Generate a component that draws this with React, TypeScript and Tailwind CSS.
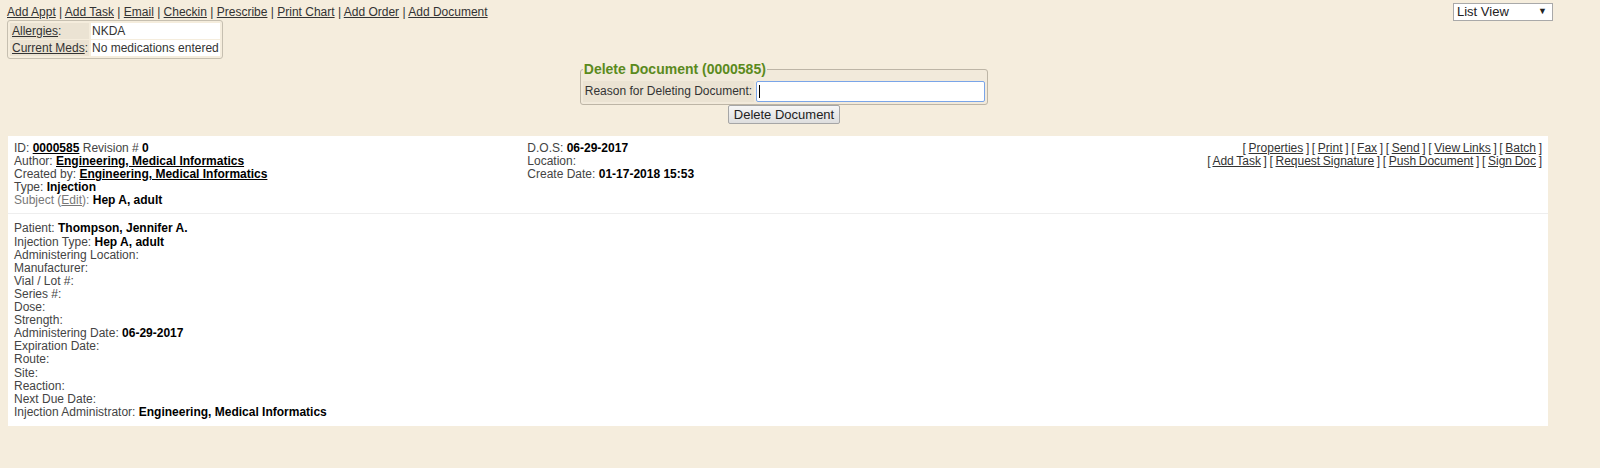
import React from "react";

const navLinks = ["Add Appt", "Add Task", "Email", "Checkin", "Prescribe", "Print Chart", "Add Order", "Add Document"];

function L({ children }: { children: React.ReactNode }) {
  return <span className="text-[#444]">{children}</span>;
}
function B({ children }: { children: React.ReactNode }) {
  return <span className="font-bold text-black">{children}</span>;
}

export default function App() {
  const actions1 = ["Properties", "Print", "Fax", "Send", "View Links", "Batch"];
  const actions2 = ["Add Task", "Request Signature", "Push Document", "Sign Doc"];
  const details: [string, string][] = [
    ["Patient", "Thompson, Jennifer A."],
    ["Injection Type", "Hep A, adult"],
    ["Administering Location", ""],
    ["Manufacturer", ""],
    ["Vial / Lot #", ""],
    ["Series #", ""],
    ["Dose", ""],
    ["Strength", ""],
    ["Administering Date", "06-29-2017"],
    ["Expiration Date", ""],
    ["Route", ""],
    ["Site", ""],
    ["Reaction", ""],
    ["Next Due Date", ""],
    ["Injection Administrator", "Engineering, Medical Informatics"],
  ];
  return (
    <div className="min-h-[468px] bg-[#f5eddd] text-[12px] leading-[13.1px] text-[#333]" style={{ fontFamily: '"Liberation Sans", Arial, sans-serif' }}>
      <div className="flex justify-between pl-[7px] pr-[47px] pt-[3px]">
        <div className="pt-[2px] text-[12px] leading-[14px]">
          {navLinks.map((l, i) => (
            <React.Fragment key={l}>
              {i > 0 && <span> | </span>}
              <a className="underline text-[#333]">{l}</a>
            </React.Fragment>
          ))}
        </div>
        <div className="flex h-[18px] w-[100px] items-center justify-between border border-[#a9a9a9] bg-white pl-[3px] pr-[5px] text-[13px] text-[#222]">
          <span>List View</span>
          <span className="text-[9px]">▼</span>
        </div>
      </div>
      <div className="ml-[7px] mt-[-1px] inline-block rounded-[3px] border border-[#c6bfb0] p-[2px]">
        <div className="flex h-[16px] items-center gap-[2px]">
          <div className="h-full w-[79px] bg-[#ebe3d3] pl-[2px] leading-[16px]"><a className="underline">Allergies</a>:</div>
          <div className="h-full w-[129px] bg-white pl-[1px] leading-[16px]">NKDA</div>
        </div>
        <div className="mt-[1px] flex h-[16px] items-center gap-[2px]">
          <div className="h-full w-[79px] bg-[#ebe3d3] pl-[2px] leading-[16px]"><a className="underline">Current Meds</a>:</div>
          <div className="h-full w-[129px] bg-white pl-[1px] leading-[16px]">No medications entered</div>
        </div>
      </div>
      <div className="mt-[1px] flex flex-col items-center pr-[32px]">
        <fieldset className="w-[408px] rounded-[3px] border border-[#bdb5a6] bg-[#f2eadb] px-[2px] pb-[2px]">
          <legend className="px-[1px] text-[14px] font-bold leading-[18px] text-[#5b8a1d]">Delete Document (0000585)</legend>
          <div className="flex items-center gap-[2px] pt-[3px]">
            <div className="h-[21px] flex-1 whitespace-nowrap bg-[#ebe3d3] pl-[2px] pr-[2px] leading-[21px]">Reason for Deleting Document:</div>
            <div className="flex h-[21px] w-[229px] shrink-0 items-center rounded-[2px] border border-[#7aa5e8] bg-white pl-[2px]">
              <div className="h-[13px] w-[1px] bg-black" />
            </div>
          </div>
        </fieldset>
        <button className="h-[19px] rounded-[2px] border border-[#a6a6a6] bg-gradient-to-b from-[#f6f6f6] to-[#dedede] px-[5px] text-[13px] leading-[17px] text-[#222]">Delete Document</button>
      </div>
      <div className="mx-[8px] mt-[12px] w-[1540px] bg-white">
        <div className="grid grid-cols-3 border-b border-[#eeeeee] pb-[6px] pt-[6px]">
          <div className="px-[6px]">
            <div><L>ID: </L><a className="font-bold text-black underline">0000585</a> <L>Revision # </L><B>0</B></div>
            <div><L>Author: </L><a className="font-bold text-black underline">Engineering, Medical Informatics</a></div>
            <div><L>Created by: </L><a className="font-bold text-black underline">Engineering, Medical Informatics</a></div>
            <div><L>Type: </L><B>Injection</B></div>
            <div><span className="text-[#777]">Subject (<a className="underline">Edit</a>): </span><B>Hep A, adult</B></div>
          </div>
          <div className="px-[6px]">
            <div><L>D.O.S: </L><B>06-29-2017</B></div>
            <div><L>Location: </L></div>
            <div><L>Create Date: </L><B>01-17-2018 15:53</B></div>
          </div>
          <div className="px-[6px] text-right text-[#333] [word-spacing:-0.7px]">
            <div>
              {actions1.map((a, i) => (
                <React.Fragment key={a}>
                  {i > 0 && " "}[ <a className="underline">{a}</a> ]
                </React.Fragment>
              ))}
            </div>
            <div>
              {actions2.map((a, i) => (
                <React.Fragment key={a}>
                  {i > 0 && " "}[ <a className="underline">{a}</a> ]
                </React.Fragment>
              ))}
            </div>
          </div>
        </div>
        <div className="px-[6px] pb-[7px] pt-[8px]">
          {details.map(([k, v]) => (
            <div key={k}><L>{k}: </L>{v && <B>{v}</B>}</div>
          ))}
        </div>
      </div>
    </div>
  );
}
